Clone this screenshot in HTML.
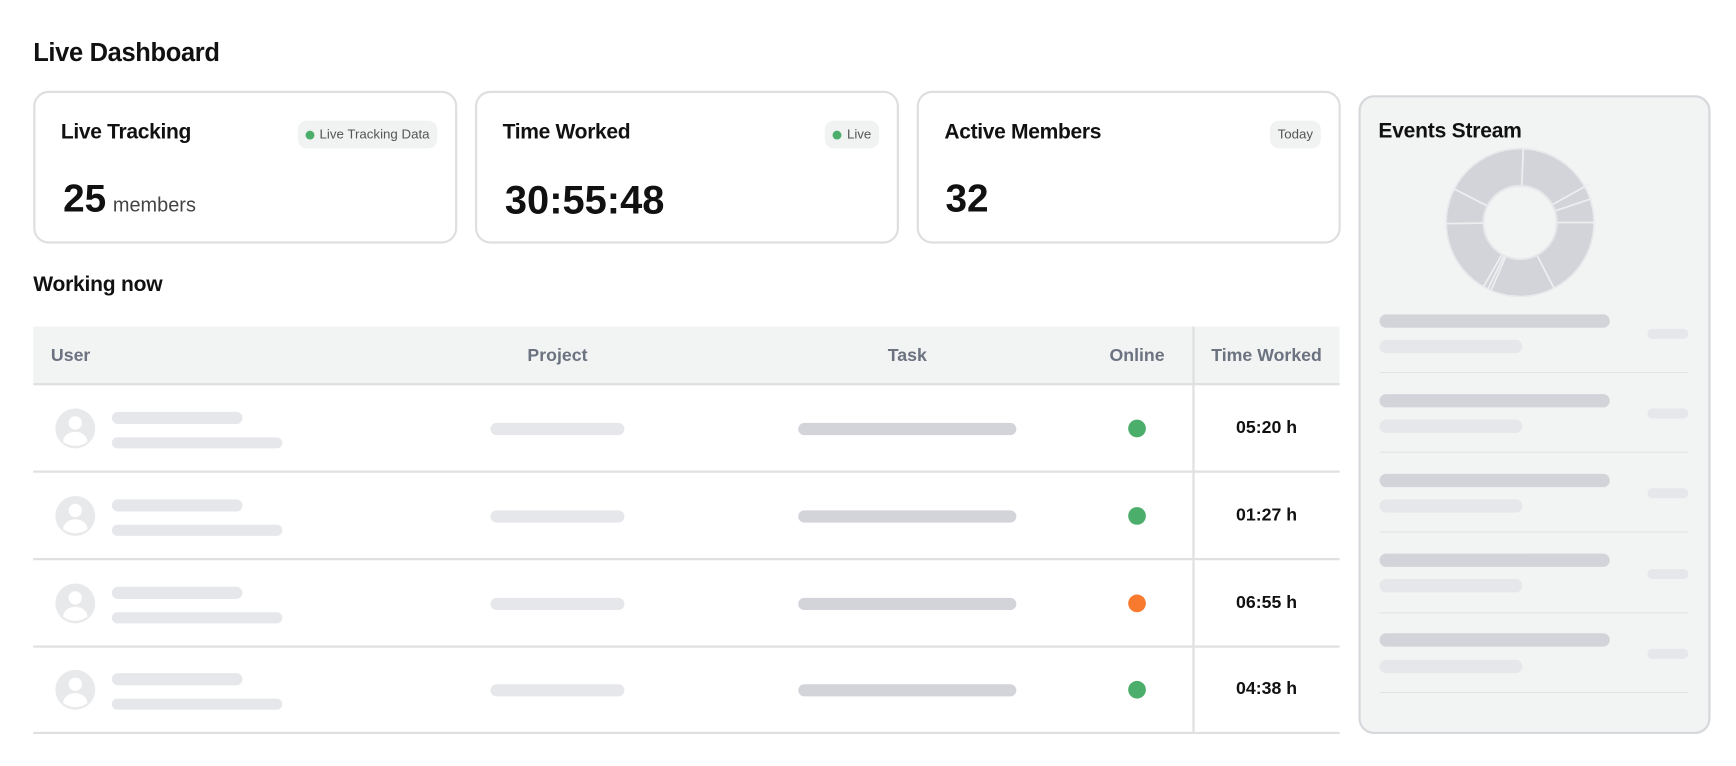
<!DOCTYPE html>
<html><head><meta charset="utf-8"><style>
html,body{margin:0;padding:0;background:#fff;width:1736px;height:766px;overflow:hidden}
#w{position:absolute;left:0;top:0;width:1568px;height:692px;transform:scale(1.10714);transform-origin:0 0;font-family:"Liberation Sans",Arial,sans-serif;color:#111}
.a{position:absolute}
.card{position:absolute;top:82px;width:379px;height:134px;border:2px solid #dedfe0;border-radius:14px;background:#fff}
.ct{position:absolute;left:23px;top:25px;font-size:19px;font-weight:600;letter-spacing:-0.3px}
.badge{position:absolute;top:25px;height:25px;background:#f1f2f2;border-radius:8px;font-size:12px;color:#555;line-height:25px;padding:0 7px 0 20px}
.badge i{position:absolute;left:7px;top:9px;width:8px;height:8px;border-radius:50%;background:#4cae6b}
.big{position:absolute;top:76px;font-size:35px;font-weight:700}
.th{position:absolute;top:295px;font-size:16px;color:#6b7280;font-weight:600;line-height:53px}
.bar{position:absolute;border-radius:6px}
.l{background:#e6e7ea}.d{background:#d2d4da}
.hl{position:absolute;left:30px;width:1180px;height:2px;background:#dfe0e1}
.tm{position:absolute;left:1080px;width:128px;text-align:center;font-size:16px;font-weight:700}
.dot{position:absolute;left:1019px;width:16px;height:16px;border-radius:50%}
</style></head><body><div id="w">
<div class="a" style="left:30px;top:34px;font-size:23px;font-weight:700;letter-spacing:-0.3px">Live Dashboard</div>

<div class="card" style="left:30px"><div class="ct">Live Tracking</div><div class="badge" style="right:16px"><i></i>Live Tracking Data</div><div class="big" style="left:25px">25<span style="font-size:18px;font-weight:400;color:#444;margin-left:6px">members</span></div></div>
<div class="card" style="left:429px"><div class="ct">Time Worked</div><div class="badge" style="right:16px"><i></i>Live</div><div class="big" style="left:25px;font-size:36px">30:55:48</div></div>
<div class="card" style="left:828px"><div class="ct">Active Members</div><div class="badge" style="right:16px;padding-left:7px">Today</div><div class="big" style="left:24px">32</div></div>

<div class="a" style="left:30px;top:247px;font-size:19px;font-weight:700;letter-spacing:-0.2px">Working now</div>
<div class="a" style="left:30px;top:295px;width:1180px;height:52px;background:#f2f3f3"></div>
<div class="th" style="left:46px">User</div>
<div class="th" style="left:443px;width:121px;text-align:center">Project</div>
<div class="th" style="left:721px;width:197px;text-align:center">Task</div>
<div class="th" style="left:987px;width:80px;text-align:center">Online</div>
<div class="th" style="left:1080px;width:128px;text-align:center">Time Worked</div>
<div class="a" style="left:1077px;top:295px;width:2px;height:367px;background:#dfe0e1"></div>
<div class="hl" style="top:346px"></div><div class="hl" style="top:425px"></div><div class="hl" style="top:504px"></div><div class="hl" style="top:583px"></div><div class="hl" style="top:661px"></div>

<svg class="a" style="left:0;top:0" width="1568" height="692">
<defs><g id="av"><circle cx="0" cy="0" r="18" fill="#e8e9eb"/><circle cx="0" cy="-5" r="6" fill="#fff"/><path d="M-11 12 a11 9 0 0 1 22 0 a18 18 0 0 1 -22 0z" fill="#fff"/></g></defs>
<use href="#av" x="68" y="387"/><use href="#av" x="68" y="466"/><use href="#av" x="68" y="545"/><use href="#av" x="68" y="623"/>
</svg>
<div class="bar l" style="left:101px;top:372px;width:118px;height:11px"></div><div class="bar l" style="left:101px;top:395px;width:154px;height:10px"></div>
<div class="bar l" style="left:443px;top:382px;width:121px;height:11px"></div><div class="bar d" style="left:721px;top:382px;width:197px;height:11px"></div>
<div class="dot" style="top:379px;background:#4cae6b"></div><div class="tm" style="top:378px">05:20 h</div>

<div class="bar l" style="left:101px;top:451px;width:118px;height:11px"></div><div class="bar l" style="left:101px;top:474px;width:154px;height:10px"></div>
<div class="bar l" style="left:443px;top:461px;width:121px;height:11px"></div><div class="bar d" style="left:721px;top:461px;width:197px;height:11px"></div>
<div class="dot" style="top:458px;background:#4cae6b"></div><div class="tm" style="top:457px">01:27 h</div>

<div class="bar l" style="left:101px;top:530px;width:118px;height:11px"></div><div class="bar l" style="left:101px;top:553px;width:154px;height:10px"></div>
<div class="bar l" style="left:443px;top:540px;width:121px;height:11px"></div><div class="bar d" style="left:721px;top:540px;width:197px;height:11px"></div>
<div class="dot" style="top:537px;background:#f77a2e"></div><div class="tm" style="top:536px">06:55 h</div>

<div class="bar l" style="left:101px;top:608px;width:118px;height:11px"></div><div class="bar l" style="left:101px;top:631px;width:154px;height:10px"></div>
<div class="bar l" style="left:443px;top:618px;width:121px;height:11px"></div><div class="bar d" style="left:721px;top:618px;width:197px;height:11px"></div>
<div class="dot" style="top:615px;background:#4cae6b"></div><div class="tm" style="top:614px">04:38 h</div>

<div class="a" style="left:1227px;top:86px;width:314px;height:573px;background:#f2f3f3;border:2px solid #d6d8db;border-radius:14px"></div>
<div class="a" style="left:1245px;top:108px;font-size:19px;font-weight:700;letter-spacing:-0.2px">Events Stream</div>
<svg class="a" style="left:1300px;top:128px" width="146" height="146">
<circle cx="73" cy="73" r="50" fill="none" stroke="#e8e9ec" stroke-width="35"/>
<circle cx="73" cy="73" r="50" fill="none" stroke="#d2d4da" stroke-width="32"/>
<g stroke="#eceeef" stroke-width="1.6">
<line x1="73" y1="73" x2="76" y2="5"/>
<line x1="73" y1="73" x2="136" y2="38"/>
<line x1="73" y1="73" x2="139" y2="51"/>
<line x1="73" y1="73" x2="141" y2="73"/>
<line x1="73" y1="73" x2="104" y2="133"/>
<line x1="73" y1="73" x2="44" y2="133"/>
<line x1="73" y1="73" x2="40" y2="131"/>
<line x1="73" y1="73" x2="47" y2="134"/>
<line x1="73" y1="73" x2="5" y2="74"/>
<line x1="73" y1="73" x2="14" y2="43"/>
</g>
<circle cx="73" cy="73" r="33" fill="#f2f3f3" stroke="#e6e7ea" stroke-width="1.5"/>
</svg>
<div class="bar d" style="left:1246px;top:284px;width:208px;height:12px"></div><div class="bar l" style="left:1246px;top:307px;width:129px;height:12px"></div><div class="bar l" style="left:1488px;top:297px;width:37px;height:9px"></div><div class="a" style="left:1246px;top:336px;width:279px;height:1px;background:#e3e4e6"></div>
<div class="bar d" style="left:1246px;top:356px;width:208px;height:12px"></div><div class="bar l" style="left:1246px;top:379px;width:129px;height:12px"></div><div class="bar l" style="left:1488px;top:369px;width:37px;height:9px"></div><div class="a" style="left:1246px;top:408px;width:279px;height:1px;background:#e3e4e6"></div>
<div class="bar d" style="left:1246px;top:428px;width:208px;height:12px"></div><div class="bar l" style="left:1246px;top:451px;width:129px;height:12px"></div><div class="bar l" style="left:1488px;top:441px;width:37px;height:9px"></div><div class="a" style="left:1246px;top:480px;width:279px;height:1px;background:#e3e4e6"></div>
<div class="bar d" style="left:1246px;top:500px;width:208px;height:12px"></div><div class="bar l" style="left:1246px;top:523px;width:129px;height:12px"></div><div class="bar l" style="left:1488px;top:514px;width:37px;height:9px"></div><div class="a" style="left:1246px;top:553px;width:279px;height:1px;background:#e3e4e6"></div>
<div class="bar d" style="left:1246px;top:572px;width:208px;height:12px"></div><div class="bar l" style="left:1246px;top:596px;width:129px;height:12px"></div><div class="bar l" style="left:1488px;top:586px;width:37px;height:9px"></div><div class="a" style="left:1246px;top:625px;width:279px;height:1px;background:#e3e4e6"></div>
</div></body></html>
